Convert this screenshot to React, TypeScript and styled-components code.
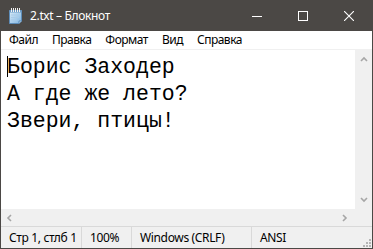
import React from 'react'
import styled, { createGlobalStyle } from 'styled-components'

const GlobalStyle = createGlobalStyle`
  html, body {
    margin: 0;
    padding: 0;
    background: #ffffff;
  }
`

const UI_FONT = `'Noto Sans', 'Liberation Sans', sans-serif`
const FRAME = '#4b4845'

const Window = styled.div`
  width: 373px;
  height: 249px;
  box-sizing: border-box;
  border: 1px solid ${FRAME};
  display: flex;
  flex-direction: column;
  font-family: ${UI_FONT};
  font-size: 12px;
  letter-spacing: -0.35px;
  color: #000;
  overflow: hidden;
`

const TitleBar = styled.div`
  height: 30px;
  flex-shrink: 0;
  background: ${FRAME};
  display: flex;
  align-items: center;
  color: #fff;
`

const AppIcon = styled.div`
  width: 16px;
  height: 16px;
  margin: 0 7px 0 6px;
  display: flex;
`

const TitleText = styled.div`
  flex: 1;
  font-size: 12px;
  line-height: 16px;
  white-space: nowrap;
`

const CaptionButton = styled.div`
  width: 46px;
  height: 30px;
  display: flex;
  align-items: center;
  justify-content: center;
`

const MenuBar = styled.div`
  height: 18px;
  flex-shrink: 0;
  background: #fff;
  display: flex;
  align-items: center;
  border-bottom: 1px solid #f0f0f0;
  padding-left: 1px;
  letter-spacing: -0.5px;
`

const MenuItem = styled.div`
  padding: 0 7px;
  line-height: 18px;
  white-space: nowrap;
`

const EditRow = styled.div`
  flex: 1;
  display: flex;
  min-height: 0;
`

const EditArea = styled.div`
  flex: 1;
  background: #fff;
  padding: 4px 0 0 6px;
  font-family: 'Liberation Mono', 'DejaVu Sans Mono', monospace;
  font-size: 21.5px;
  letter-spacing: 0;
  line-height: 27px;
  white-space: pre;
  overflow: hidden;
`

const Caret = styled.span`
  display: inline-block;
  width: 1px;
  height: 21px;
  background: #000;
  vertical-align: -4px;
  margin-right: -1px;
`

const VScroll = styled.div`
  width: 17px;
  background: #f0f0f0;
  display: flex;
  flex-direction: column;
  justify-content: space-between;
  align-items: center;
  padding: 6px 0 5px;
  box-sizing: border-box;
`

const HScrollRow = styled.div`
  height: 17px;
  flex-shrink: 0;
  display: flex;
  background: #f0f0f0;
`

const HScroll = styled.div`
  flex: 1;
  display: flex;
  align-items: center;
  justify-content: space-between;
  padding: 0 6px 0 5px;
`

const Corner = styled.div`
  width: 17px;
  background: #f0f0f0;
`

const StatusBar = styled.div`
  height: 22px;
  flex-shrink: 0;
  box-sizing: border-box;
  border-top: 1px solid #d9d9d9;
  background: #f0f0f0;
  display: flex;
  align-items: center;
  position: relative;
`

const StatusCell = styled.div<{ $w?: number }>`
  ${({ $w }) => ($w ? `width: ${$w}px;` : 'flex: 1;')}
  height: 21px;
  box-sizing: border-box;
  display: flex;
  align-items: center;
  padding-left: 8px;
  white-space: nowrap;
  border-right: ${({ $w }) => ($w ? '1px solid #d9d9d9' : 'none')};
`

const Grip = styled.svg`
  position: absolute;
  right: 1px;
  bottom: 1px;
`

const NotepadIcon = () => (
  <svg width="16" height="16" viewBox="0 0 16 16">
    <defs>
      <linearGradient id="pg" x1="0" y1="0" x2="1" y2="1">
        <stop offset="0" stopColor="#dcedf9" />
        <stop offset="1" stopColor="#7fb4e0" />
      </linearGradient>
    </defs>
    <path d="M2.5 2.5 H14.5 V13 L12 15.5 H2.5 Z" fill="url(#pg)" stroke="#5d8cb8" />
    <path d="M12 15.5 V13 H14.5" fill="#cfe3f3" stroke="#5d8cb8" />
    <line x1="4" y1="7" x2="12" y2="7" stroke="#a9cbe8" />
    <line x1="4" y1="9.5" x2="12" y2="9.5" stroke="#a9cbe8" />
    <line x1="4" y1="12" x2="10" y2="12" stroke="#a9cbe8" />
    <rect x="2.5" y="2.5" width="12" height="2" fill="#6f9cc6" />
    {[4, 6, 8, 10, 12].map((x) => (
      <rect key={x} x={x} y="0" width="1" height="4" fill="#f2f2f2" />
    ))}
  </svg>
)

const Chevron = ({ dir }: { dir: 'up' | 'down' | 'left' | 'right' }) => {
  const pts = {
    up: '1,5 4,2 7,5',
    down: '1,2 4,5 7,2',
    left: '5,1 2,4 5,7',
    right: '2,1 5,4 2,7',
  }[dir]
  return (
    <svg width="8" height="8" viewBox="0 0 8 8">
      <polyline points={pts} fill="none" stroke="#a6a6a6" strokeWidth="1.6" />
    </svg>
  )
}

export default function App() {
  return (
    <>
      <GlobalStyle />
      <Window>
        <TitleBar>
          <AppIcon>
            <NotepadIcon />
          </AppIcon>
          <TitleText>2.txt – Блокнот</TitleText>
          <CaptionButton>
            <svg width="10" height="10" viewBox="0 0 10 10">
              <line x1="0" y1="5.5" x2="10" y2="5.5" stroke="#fff" />
            </svg>
          </CaptionButton>
          <CaptionButton>
            <svg width="10" height="10" viewBox="0 0 10 10">
              <rect x="0.5" y="0.5" width="9" height="9" fill="none" stroke="#fff" />
            </svg>
          </CaptionButton>
          <CaptionButton>
            <svg width="10" height="10" viewBox="0 0 10 10">
              <path d="M0 0 L10 10 M10 0 L0 10" stroke="#fff" strokeWidth="1.1" />
            </svg>
          </CaptionButton>
        </TitleBar>
        <MenuBar>
          <MenuItem>Файл</MenuItem>
          <MenuItem>Правка</MenuItem>
          <MenuItem>Формат</MenuItem>
          <MenuItem>Вид</MenuItem>
          <MenuItem>Справка</MenuItem>
        </MenuBar>
        <EditRow>
          <EditArea>
            <Caret />
            {'Борис Заходер\nА где же лето?\nЗвери, птицы!'}
          </EditArea>
          <VScroll>
            <Chevron dir="up" />
            <Chevron dir="down" />
          </VScroll>
        </EditRow>
        <HScrollRow>
          <HScroll>
            <Chevron dir="left" />
            <Chevron dir="right" />
          </HScroll>
          <Corner />
        </HScrollRow>
        <StatusBar>
          <StatusCell $w={81}>Стр 1, стлб 1</StatusCell>
          <StatusCell $w={50}>100%</StatusCell>
          <StatusCell $w={120}>Windows (CRLF)</StatusCell>
          <StatusCell>ANSI</StatusCell>
          <Grip width="8" height="8" viewBox="0 0 8 8">
            {[
              [6, 0],
              [3, 3],
              [6, 3],
              [0, 6],
              [3, 6],
              [6, 6],
            ].map(([x, y]) => (
              <rect key={`${x}-${y}`} x={x} y={y} width="2" height="2" fill="#b5b5b5" />
            ))}
          </Grip>
        </StatusBar>
      </Window>
    </>
  )
}
